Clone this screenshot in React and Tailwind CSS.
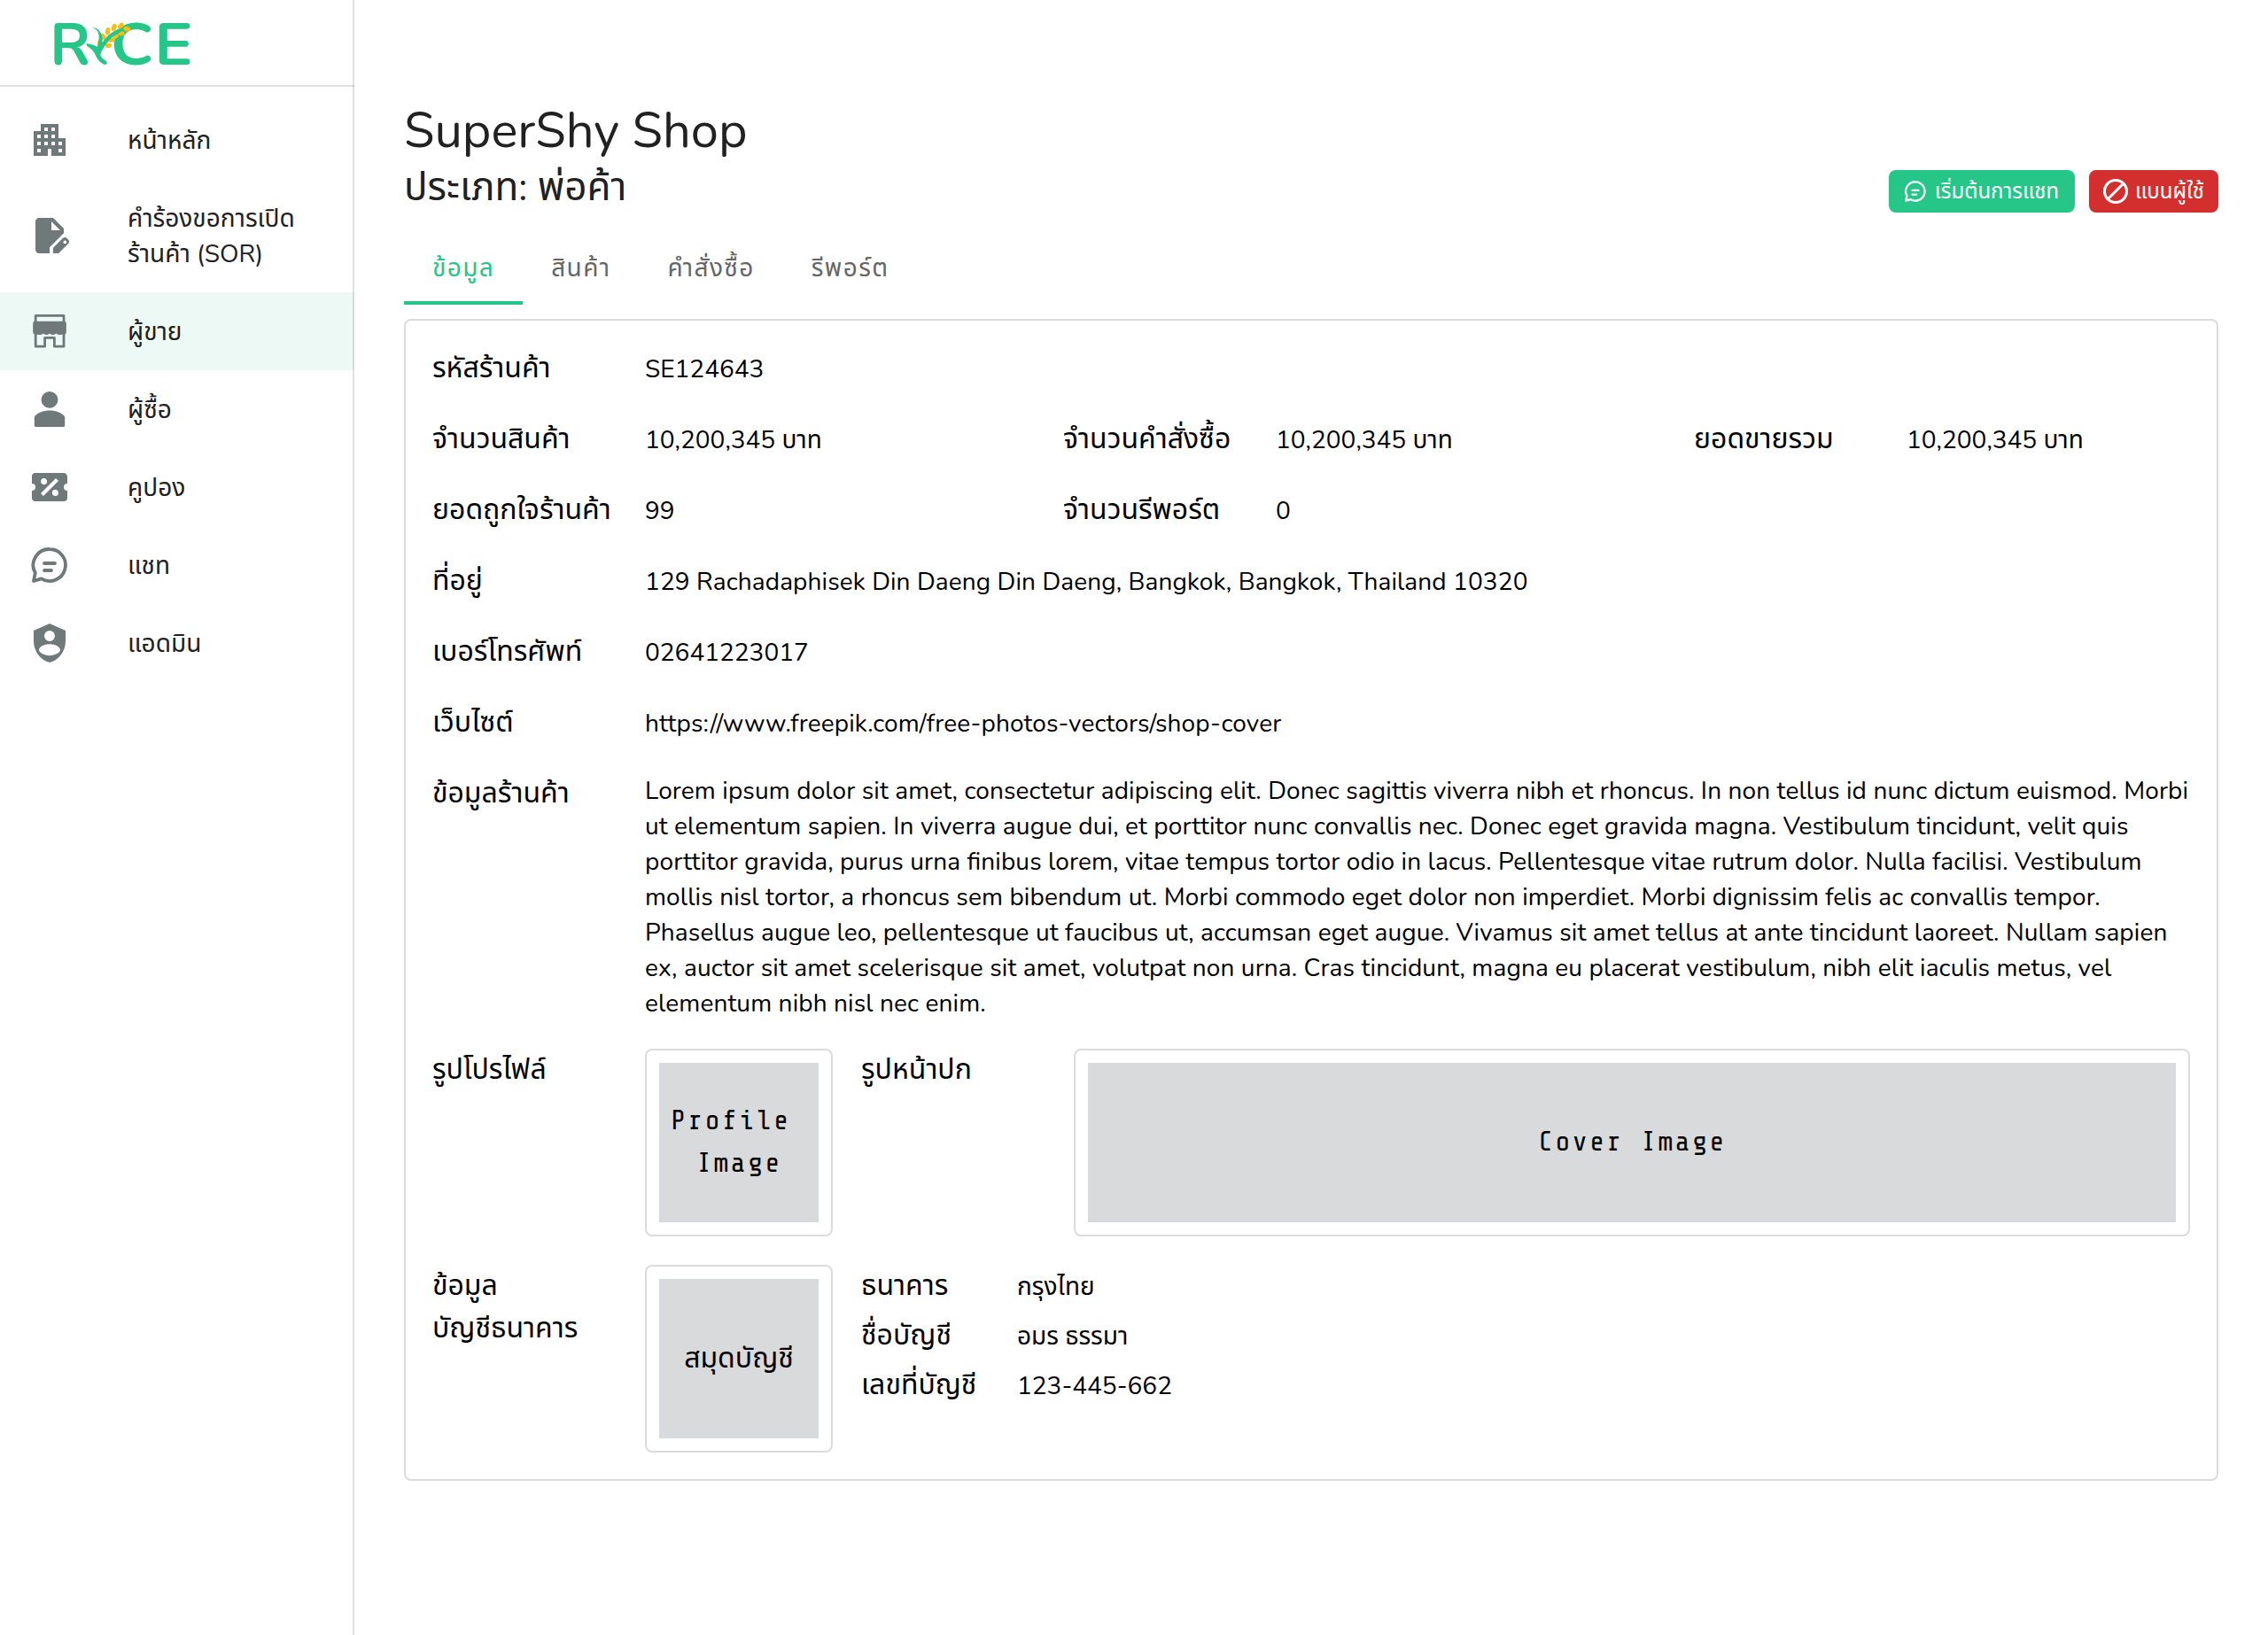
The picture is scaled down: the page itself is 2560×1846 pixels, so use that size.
import React from "react";
import { MdApartment } from "react-icons/md";

const SHOP_INFO = [
  "Lorem ipsum dolor sit amet, consectetur adipiscing elit. Donec sagittis viverra nibh et rhoncus. In non tellus id nunc dictum euismod. Morbi",
  "ut elementum sapien. In viverra augue dui, et porttitor nunc convallis nec. Donec eget gravida magna. Vestibulum tincidunt, velit quis",
  "porttitor gravida, purus urna finibus lorem, vitae tempus tortor odio in lacus. Pellentesque vitae rutrum dolor. Nulla facilisi. Vestibulum",
  "mollis nisl tortor, a rhoncus sem bibendum ut. Morbi commodo eget dolor non imperdiet. Morbi dignissim felis ac convallis tempor.",
  "Phasellus augue leo, pellentesque ut faucibus ut, accumsan eget augue. Vivamus sit amet tellus at ante tincidunt laoreet. Nullam sapien",
  "ex, auctor sit amet scelerisque sit amet, volutpat non urna. Cras tincidunt, magna eu placerat vestibulum, nibh elit iaculis metus, vel",
  "elementum nibh nisl nec enim.",
];

function Logo() {
  return (
    <svg viewBox="0 -60 540 318" className="-my-5 h-[106px] w-[180px]" aria-label="RICE">
      <g fill="#25c688" fontFamily="Nunito, sans-serif" fontWeight="700" fontSize="196">
        <text transform="translate(19 171) scale(1.030 1)">R</text>
        <text transform="translate(225 171) scale(1.080 1)">C</text>
        <text transform="translate(373 171) scale(1.110 1)">E</text>
      </g>
      <g fill="#fff">
        <path d="M160 92 190 128 236 110 232 132 206 160 168 140 148 108z" />
      </g>
      <g fill="#fbbc14">
        <ellipse cx="215" cy="58" rx="8" ry="13" transform="rotate(8 215 58)" />
        <ellipse cx="236" cy="45" rx="8" ry="13" transform="rotate(22 236 45)" />
        <ellipse cx="259" cy="40" rx="8" ry="12" transform="rotate(38 259 40)" />
        <ellipse cx="199" cy="76" rx="8" ry="12" transform="rotate(-35 199 76)" />
        <ellipse cx="187" cy="98" rx="7" ry="12" />
        <ellipse cx="261" cy="65" rx="11" ry="8" />
        <ellipse cx="242" cy="75" rx="10" ry="7" transform="rotate(-20 242 75)" />
        <ellipse cx="228" cy="88" rx="11" ry="7" transform="rotate(-15 228 88)" />
        <ellipse cx="217" cy="106" rx="11" ry="8" transform="rotate(-5 217 106)" />
      </g>
      <g fill="#25c688">
        <path d="M159 46c16-3 30 8 35 24 3 9 4 18 2 26 18-26 40-44 76-52l10 6c-36 12-58 30-76 56-8 12-14 22-16 31 3 10 8 14 16 19 6 4 8 9 5 13-3 3-8 2-13-1-14-8-23-22-26-33-5-10-14-18-26-26-4-3-4-8-2-10 18 4 27 6 36 12 5-22 8-36 1-52-4-7-12-12-22-13z" />
      </g>
      <ellipse cx="280" cy="50" rx="12" ry="8.500" transform="rotate(10 280 50)" fill="#fbbc14" />
    </svg>
  );
}

function EditDocumentIcon({ className }) {
  return (
    <svg viewBox="0 0 24 24" fill="currentColor" className={className}>
      <path fillRule="evenodd" d="M6 2h8l6 6v2.600l-8 8V22H6c-1.100 0-2-.9-2-2V4c0-1.100.9-2 2-2zm7 2v5h5z" />
      <path
        fillRule="evenodd"
        d="M14 22v-3.080l5.530-5.520c.3-.29.700-.4 1.060-.4.380 0 .760.140 1.060.430l.920.930c.3.3.430.680.430 1.060s-.140.770-.430 1.070L17.050 22zm6.650-7.250a.95.950 0 1 0 0 1.900.95.950 0 0 0 0-1.900z"
      />
    </svg>
  );
}

function StoreIcon({ className }) {
  return (
    <svg viewBox="0 0 24 24" className={className}>
      <path fill="none" stroke="currentColor" strokeWidth="1.400" strokeLinejoin="round" d="M4.100 7V3.200h15.900V7M4.100 13v7.600h5.200v-4.900h5.400v4.900h5.300V13" />
      <path fill="currentColor" d="M3.200 6.400h17.600l.6.800v5.300c0 .9-.7 1.400-1.600 1.400-.6 0-1.300.1-2 .1s-1.500-.3-2.100-.8c-.8.6-1.500.8-2.200.8s-1-.3-1.500-.7c-.5.4-.8.7-1.500.7s-1.400-.2-2.100-.8c-.6.5-1.300.8-2.100.8-.7 0-1.200-.1-2-.1-.9 0-1.700-.5-1.700-1.400V7.200z" />
    </svg>
  );
}

function PersonIcon({ className }) {
  return (
    <svg viewBox="0 0 24 24" fill="currentColor" className={className}>
      <circle cx="12" cy="6.700" r="4.700" />
      <path d="M12 12.700c3.800 0 6.500 1.300 8.100 2.900.3.300.5.700.5 1.200v4.300c0 .6-.3.900-.9.900H4.300c-.6 0-.9-.3-.9-.9v-4.300c0-.5.2-.9.500-1.200 1.600-1.600 4.300-2.900 8.100-2.900z" />
    </svg>
  );
}

function CouponIcon({ className }) {
  return (
    <svg viewBox="0 0 24 24" fill="currentColor" className={className}>
      <path d="M4,4A2,2 0 0,0 2,6V10A2,2 0 0,1 4,12A2,2 0 0,1 2,14V18A2,2 0 0,0 4,20H20A2,2 0 0,0 22,18V14A2,2 0 0,1 20,12A2,2 0 0,1 22,10V6C22,4.890 21.100,4 20,4H4M15.500,7L17,8.500L8.500,17L7,15.500L15.500,7M8.810,7.040C9.790,7.040 10.580,7.830 10.580,8.810A1.770,1.770 0 0,1 8.810,10.580C7.830,10.580 7.040,9.790 7.040,8.810A1.770,1.770 0 0,1 8.810,7.040M15.190,13.420C16.170,13.420 16.960,14.210 16.960,15.190A1.770,1.770 0 0,1 15.190,16.960C14.210,16.960 13.420,16.170 13.420,15.190A1.770,1.770 0 0,1 15.190,13.420Z" />
    </svg>
  );
}

function ChatIcon({ className }) {
  return (
    <svg viewBox="0 0 24 24" fill="none" stroke="currentColor" strokeWidth="1.900" strokeLinecap="round" strokeLinejoin="round" className={className}>
      <path d="M12 3a9 9 0 1 1-4.700 16.700L3 21l.9-4.600A9 9 0 0 1 12 3z" />
      <path d="M9 11h6M9 15h4" />
    </svg>
  );
}

function AdminIcon({ className }) {
  return (
    <svg viewBox="0 0 24 24" fill="currentColor" className={className}>
      <path
        fillRule="evenodd"
        d="M12 1 3 5v6c0 5.550 3.840 10.740 9 12 5.160-1.260 9-6.450 9-12V5zm0 4a3 3 0 0 1 0 6 3 3 0 0 1 0-6zm0 7.600c3.300 0 6 1.700 6 3.200 0 1.600-2.700 3.300-6 3.300s-6-1.700-6-3.300c0-1.500 2.700-3.200 6-3.200z"
      />
    </svg>
  );
}

function BanIcon({ className }) {
  return (
    <svg viewBox="0 0 28 28" fill="none" stroke="currentColor" strokeWidth="3" className={className}>
      <circle cx="14" cy="14" r="12.500" />
      <path d="M5.300 22.700 22.700 5.300" />
    </svg>
  );
}

const NAV = [
  { label: "หน้าหลัก", Icon: MdApartment },
  { label: "คำร้องขอการเปิดร้านค้า (SOR)", lines: ["คำร้องขอการเปิด", "ร้านค้า (SOR)"], Icon: EditDocumentIcon },
  { label: "ผู้ขาย", Icon: StoreIcon, active: true },
  { label: "ผู้ซื้อ", Icon: PersonIcon },
  { label: "คูปอง", Icon: CouponIcon },
  { label: "แชท", Icon: ChatIcon },
  { label: "แอดมิน", Icon: AdminIcon },
];

const TABS = ["ข้อมูล", "สินค้า", "คำสั่งซื้อ", "รีพอร์ต"];

function Sidebar() {
  return (
    <aside className="flex w-[400px] shrink-0 flex-col">
      <div className="flex h-[98px] shrink-0 items-start border-b-2 border-[#e0e0e0] pt-4 pl-[50px]">
        <Logo />
      </div>
      <nav className="flex flex-col pt-4">
        {NAV.map(({ label, lines, Icon, active }) => (
          <div key={label} className={`flex items-center py-6 pl-8 ${active ? "bg-[#edf9f5]" : ""}`}>
            <Icon className="-my-1 size-12 shrink-0 text-[#6f7979]" />
            <div className="ml-16 translate-y-px text-[28px] leading-10 text-[#212121]">
              {(lines || [label]).map((line) => (
                <div key={line}>{line}</div>
              ))}
            </div>
          </div>
        ))}
      </nav>
    </aside>
  );
}

function Label({ children }) {
  return <div className="text-[32px] leading-[48px] whitespace-nowrap">{children}</div>;
}

function Value({ children }) {
  return <div className="translate-y-px self-center text-[28px] leading-10">{children}</div>;
}

function Row({ children }) {
  return <div className="grid grid-cols-[208px_440px_208px_440px_208px_1fr] gap-x-8">{children}</div>;
}

function WideRow({ label, children }) {
  return (
    <div className="grid grid-cols-[208px_1fr] gap-x-8 [font-feature-settings:'liga'_1]">
      <Label>{label}</Label>
      <Value>{children}</Value>
    </div>
  );
}

function ImageFrame({ mono, children }) {
  return (
    <div className="h-[212px] rounded-lg border-2 border-[#dcdcdc] p-[14px]">
      <div
        className={`flex h-full items-center justify-center bg-[#d9dadc] text-center leading-[48px] ${
          mono ? "pl-[1px] font-['Share_Tech_Mono','DejaVu_Sans_Mono',monospace] text-[31px] tracking-[2.6px]" : "text-[32px]"
        }`}
      >
        {children}
      </div>
    </div>
  );
}

export default function App() {
  return (
    <div className="flex h-[1846px] w-[2560px] overflow-hidden bg-white font-['Nunito','Noto_Sans_Thai',sans-serif] text-black">
      <Sidebar />
      <main className="-ml-[2px] flex flex-1 flex-col border-l-2 border-black/12 pt-[115px] pr-14 pl-14">
        <header className="flex h-[125px] items-end justify-between text-[#212121]">
          <div className="h-[125px]">
            <h1 className="text-[56px] leading-[65px]">SuperShy Shop</h1>
            <p className="pt-[2px] text-[44px] leading-[60px]">ประเภท: พ่อค้า</p>
          </div>
          <div className="flex gap-4 text-[24px] text-white">
            <button className="flex h-12 w-[210px] items-center justify-center gap-[10px] rounded-lg bg-[#25c688]">
              <ChatIcon className="size-6 scale-[1.180]" />
              เริ่มต้นการแชท
            </button>
            <button className="flex h-12 w-[146px] items-center justify-center gap-2 rounded-lg bg-[#d32f2f]">
              <BanIcon className="size-7" />
              แบนผู้ใช้
            </button>
          </div>
        </header>

        <div className="mt-2 flex h-24">
          {TABS.map((tab, i) => (
            <div
              key={tab}
              className={`flex items-end border-b-4 px-8 pb-[19px] text-[28px] leading-[35px] tracking-[1.4px] ${
                i === 0 ? "border-[#25c688] text-[#25c688]" : "border-transparent text-[#666]"
              }`}
            >
              {tab}
            </div>
          ))}
        </div>

        <section className="mt-4 flex flex-col gap-8 rounded-lg border-2 border-[#dcdcdc] p-[30px]">
          <Row>
            <Label>รหัสร้านค้า</Label>
            <Value>SE124643</Value>
          </Row>
          <Row>
            <Label>จำนวนสินค้า</Label>
            <Value>10,200,345 บาท</Value>
            <Label>จำนวนคำสั่งซื้อ</Label>
            <Value>10,200,345 บาท</Value>
            <Label>ยอดขายรวม</Label>
            <Value>10,200,345 บาท</Value>
          </Row>
          <Row>
            <Label>ยอดถูกใจร้านค้า</Label>
            <Value>99</Value>
            <Label>จำนวนรีพอร์ต</Label>
            <Value>0</Value>
          </Row>
          <WideRow label="ที่อยู่">
            <span className="tracking-[0.1px]">129 Rachadaphisek Din Daeng Din Daeng, Bangkok, Bangkok, Thailand 10320</span>
          </WideRow>
          <WideRow label="เบอร์โทรศัพท์">02641223017</WideRow>
          <WideRow label="เว็บไซต์">
            <span className="tracking-[0.12px]">https://www.freepik.com/free-photos-vectors/shop-cover</span>
          </WideRow>
          <WideRow label="ข้อมูลร้านค้า">
            {SHOP_INFO.map((line) => (
              <div key={line} className="tracking-[0.12px] whitespace-nowrap">
                {line}
              </div>
            ))}
          </WideRow>
          <div className="grid grid-cols-[208px_212px_208px_1fr] gap-x-8">
            <Label>รูปโปรไฟล์</Label>
            <ImageFrame mono>
              <div>
                Profile&nbsp;
                <br />
                Image
              </div>
            </ImageFrame>
            <Label>รูปหน้าปก</Label>
            <ImageFrame mono>Cover Image</ImageFrame>
          </div>
          <div className="grid grid-cols-[208px_212px_1fr] gap-x-8">
            <Label>
              ข้อมูล
              <br />
              บัญชีธนาคาร
            </Label>
            <ImageFrame>สมุดบัญชี</ImageFrame>
            <div className="grid grid-cols-[144px_1fr] content-start gap-x-8 gap-y-2">
              <Label>ธนาคาร</Label>
              <Value>กรุงไทย</Value>
              <Label>ชื่อบัญชี</Label>
              <Value>อมร ธรรมา</Value>
              <Label>เลขที่บัญชี</Label>
              <Value>123-445-662</Value>
            </div>
          </div>
        </section>
      </main>
    </div>
  );
}
